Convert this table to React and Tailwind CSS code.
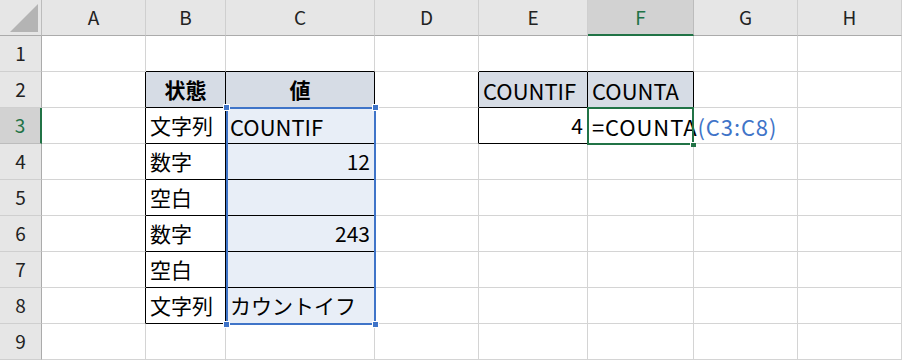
import React from 'react';

const COLS = ['A', 'B', 'C', 'D', 'E', 'F', 'G', 'H'];
const WIDTHS = ['w-[104px]', 'w-[80px]', 'w-[149px]', 'w-[104px]', 'w-[109px]', 'w-[106px]', 'w-[104px]', 'w-[104px]'];

const HEAD_BG = 'bg-[#d6dce5]';
const SEL_BG = 'bg-[#e8eef7]';

// cells keyed by "C3" style refs
const cells = {
  B2: { text: '状態', head: true, bold: true, align: 'center' },
  C2: { text: '値', head: true, bold: true, align: 'center' },
  E2: { text: 'COUNTIF', head: true, latin: true },
  F2: { text: 'COUNTA', head: true, latin: true },
  B3: { text: '文字列' },
  B4: { text: '数字' },
  B5: { text: '空白' },
  B6: { text: '数字' },
  B7: { text: '空白' },
  B8: { text: '文字列' },
  C3: { text: 'COUNTIF', latin: true },
  C4: { text: '12', align: 'right' },
  C6: { text: '243', align: 'right' },
  C8: { text: 'カウントイフ' },
  E3: { text: '4', align: 'right' },
  F3: {
    latin: true,
    text: (
      <span className="tracking-[0.9px]">
        =COUNTA<span className="text-[#3f74c8]">(C3:C8)</span>
      </span>
    ),
  },
};

const rightBlack = new Set(['A2', 'A3', 'A4', 'A5', 'A6', 'A7', 'A8', 'B2', 'B3', 'B4', 'B5', 'B6', 'B7', 'B8', 'C2', 'C3', 'C4', 'C5', 'C6', 'C7', 'C8', 'D2', 'D3', 'E2', 'E3', 'F2', 'F3']);
const bottomBlack = new Set(['B1', 'C1', 'B2', 'B3', 'B4', 'B5', 'B6', 'B7', 'B8', 'C2', 'C3', 'C4', 'C5', 'C6', 'C7', 'C8', 'E1', 'F1', 'E2', 'F2', 'E3', 'F3']);

function Cell({ id, width }) {
  const c = cells[id] || {};
  const col = id[0];
  const row = Number(id.slice(1));
  const inRange = col === 'C' && row >= 3 && row <= 8;
  const bg = c.head ? HEAD_BG : inRange ? SEL_BG : '';
  const r = rightBlack.has(id) ? 'border-r-black' : 'border-r-[#d4d4d4]';
  const b = bottomBlack.has(id) ? 'border-b-black' : 'border-b-[#d4d4d4]';
  const align = c.align === 'center' ? 'justify-center' : c.align === 'right' ? 'justify-end' : 'justify-start';
  return (
    <div className={`${width} h-full shrink-0 flex items-center px-[4px] border-r border-b ${r} ${b} ${bg} ${align} whitespace-nowrap`}>
      <span className={`${c.latin ? 'text-[22px]' : 'text-[21px]'} leading-none ${c.bold ? 'font-bold' : ''}`}>{c.text}</span>
    </div>
  );
}

function Handle({ className }) {
  return <div className={`absolute w-[7px] h-[7px] bg-[#3f74c8] border border-white ${className}`} />;
}

export default function App() {
  const rows = [1, 2, 3, 4, 5, 6, 7, 8, 9];
  return (
    <div className="relative w-[902px] h-[361px] bg-white overflow-hidden text-black font-['Noto_Sans_CJK_JP','Liberation_Sans',sans-serif]">
      {/* column headers */}
      <div className="flex h-[36px]">
        <div className="w-[42px] h-full shrink-0 bg-[#e6e6e6] border-r border-b border-r-[#bcbcbc] border-b-[#ababab] flex items-end justify-end pr-[2px] pb-[2px]">
          <svg width="29" height="30" viewBox="0 0 29 30">
            <polygon points="0,29 28,29 28,1" fill="#b4b4b4" />
          </svg>
        </div>
        {COLS.map((col, i) =>
          col === 'F' ? (
            <div key={col} className={`${WIDTHS[i]} h-full shrink-0 bg-[#d2d2d2] border-r border-r-[#bcbcbc] border-b-2 border-b-[#217346] flex items-center justify-center text-[19px] text-[#217346]`}>
              {col}
            </div>
          ) : (
            <div key={col} className={`${WIDTHS[i]} h-full shrink-0 bg-[#e6e6e6] border-r border-b border-r-[#cfcfcf] border-b-[#ababab] flex items-center justify-center text-[19px] text-[#222]`}>
              {col}
            </div>
          )
        )}
      </div>

      {rows.map((row) => (
        <div key={row} className="flex h-[36px]">
          {row === 3 ? (
            <div className="w-[42px] h-full shrink-0 bg-[#d2d2d2] border-r-2 border-b border-r-[#217346] border-b-[#bcbcbc] flex items-center justify-center text-[19px] text-[#217346]">
              {row}
            </div>
          ) : (
            <div className="w-[42px] h-full shrink-0 bg-[#e6e6e6] border-r border-b border-r-[#ababab] border-b-[#cfcfcf] flex items-center justify-center text-[19px] text-[#222]">
              {row}
            </div>
          )}
          {COLS.map((col, i) => (
            <Cell key={col} id={`${col}${row}`} width={WIDTHS[i]} />
          ))}
        </div>
      ))}

      {/* selected range C3:C8 */}
      <div className="absolute left-[226px] top-[107px] w-[150px] h-[218px] border-2 border-[#3f74c8] pointer-events-none">
        <Handle className="-left-[5px] -top-[5px]" />
        <Handle className="-right-[5px] -top-[5px]" />
        <Handle className="-left-[5px] -bottom-[5px]" />
        <Handle className="-right-[5px] -bottom-[5px]" />
      </div>

      {/* active cell F3 */}
      <div className="absolute left-[587px] top-[107px] w-[107px] h-[38px] border-2 border-[#217346] pointer-events-none">
        <div className="absolute -right-[4px] -bottom-[4px] w-[6px] h-[5px] bg-[#217346] border-l border-t border-white" />
      </div>
    </div>
  );
}
